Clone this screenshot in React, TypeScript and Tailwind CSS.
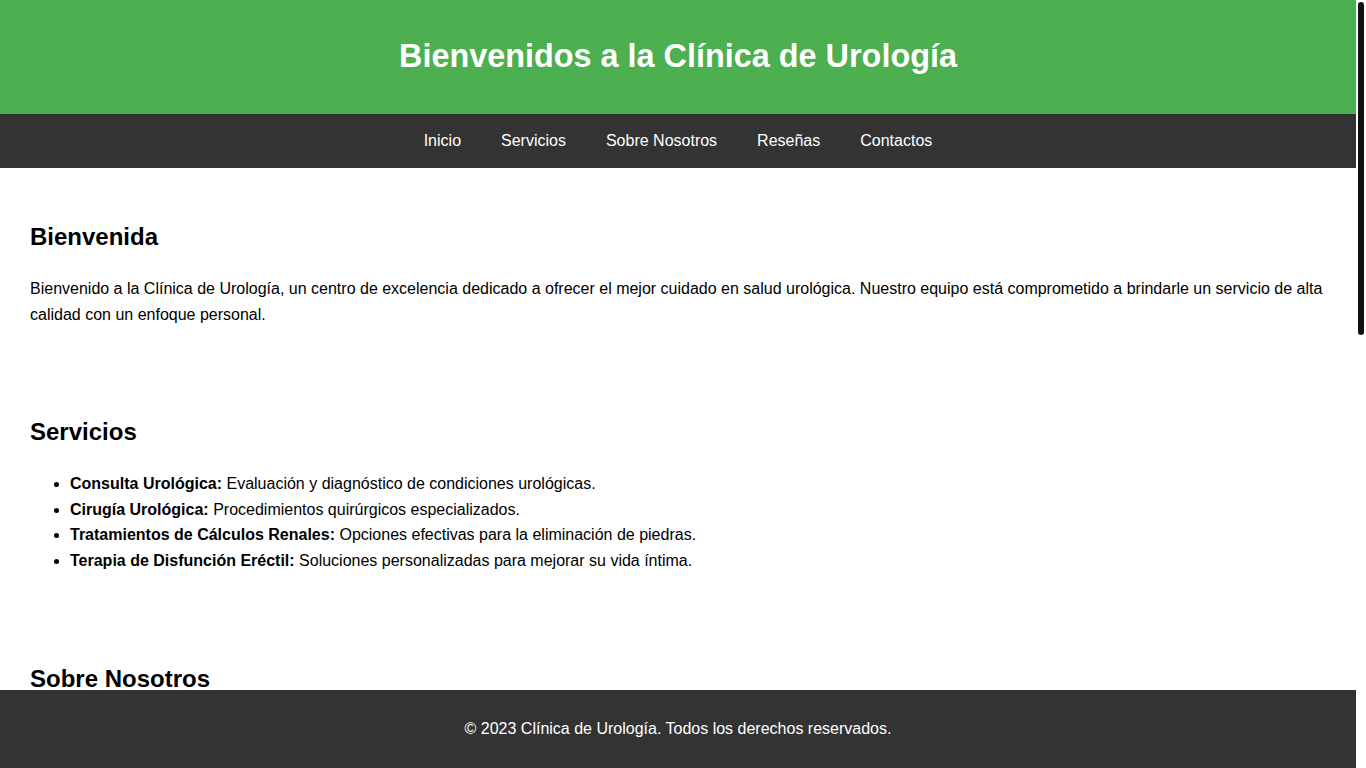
const navLinks = ['Inicio', 'Servicios', 'Sobre Nosotros', 'Reseñas', 'Contactos']

const services = [
  { name: 'Consulta Urológica:', text: 'Evaluación y diagnóstico de condiciones urológicas.' },
  { name: 'Cirugía Urológica:', text: 'Procedimientos quirúrgicos especializados.' },
  { name: 'Tratamientos de Cálculos Renales:', text: 'Opciones efectivas para la eliminación de piedras.' },
  { name: 'Terapia de Disfunción Eréctil:', text: 'Soluciones personalizadas para mejorar su vida íntima.' },
]

function SectionTitle({ children }: { children: React.ReactNode }) {
  return <h2 className="text-[24px] leading-[28px] font-bold text-black">{children}</h2>
}

export default function App() {
  return (
    <div className="h-screen flex overflow-hidden bg-white text-black [font-family:'Liberation_Sans',Arial,sans-serif]">
      {/* page */}
      <div className="relative flex-1 min-w-0 overflow-hidden">
        <header className="h-[114px] bg-[#4CAF50] flex items-center justify-center pb-[2px]">
          <h1 className="text-[32.4px] leading-[37px] font-bold text-white">
            Bienvenidos a la Clínica de Urología
          </h1>
        </header>

        <nav className="h-[54px] bg-[#333] flex items-center justify-center">
          {navLinks.map((link) => (
            <a key={link} href="#" className="px-[20px] text-[16px] leading-[18px] text-white">
              {link}
            </a>
          ))}
        </nav>

        <main className="px-[30px] pt-[55px] pb-[120px] flex flex-col gap-[91px]">
          <section>
            <SectionTitle>Bienvenida</SectionTitle>
            <p className="mt-[25px] text-[16px] leading-[25.6px]">
              Bienvenido a la Clínica de Urología, un centro de excelencia dedicado a ofrecer el mejor cuidado en salud
              urológica. Nuestro equipo está comprometido a brindarle un servicio de alta calidad con un enfoque personal.
            </p>
          </section>

          <section>
            <SectionTitle>Servicios</SectionTitle>
            <ul className="mt-[25px] pl-[40px] list-disc text-[16px] leading-[25.6px]">
              {services.map((s) => (
                <li key={s.name}>
                  <strong className="font-bold">{s.name}</strong> {s.text}
                </li>
              ))}
            </ul>
          </section>

          <section>
            <SectionTitle>Sobre Nosotros</SectionTitle>
            <p className="mt-[25px] text-[16px] leading-[25.6px]">
              Contamos con un equipo de urólogos altamente calificados y con años de experiencia.
            </p>
          </section>
        </main>

        <footer className="absolute left-0 right-0 bottom-0 h-[78px] bg-[#333] flex items-center justify-center">
          <p className="text-[16px] leading-[18px] text-white">
            © 2023 Clínica de Urología. Todos los derechos reservados.
          </p>
        </footer>
      </div>

      {/* scrollbar */}
      <div className="w-[10px] shrink-0 bg-white pt-[2px] flex justify-center">
        <div className="w-[6px] h-[333px] rounded-full bg-[#111]" />
      </div>
    </div>
  )
}
